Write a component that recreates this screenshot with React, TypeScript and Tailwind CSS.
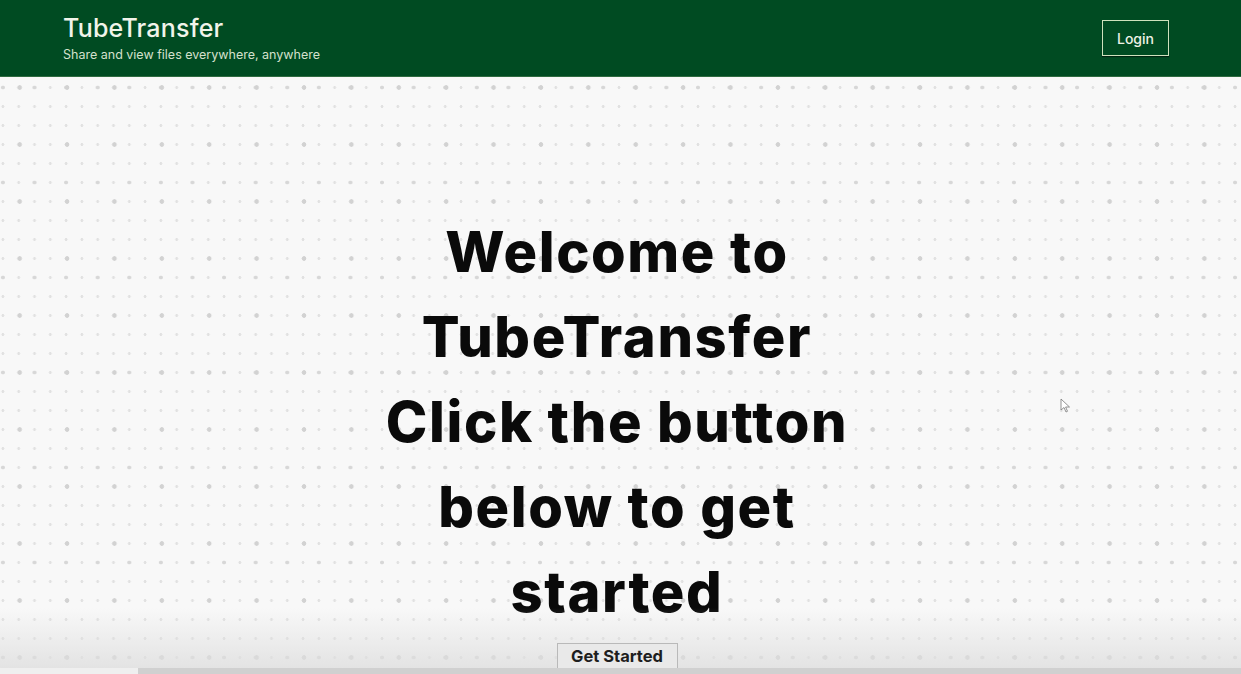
import React from "react";

export default function App() {
  const font = { fontFamily: "Inter, 'Noto Sans', sans-serif" };
  return (
    <div className="relative flex h-[674px] w-full flex-col overflow-hidden bg-[#f7f7f7]" style={font}>
      <header className="flex h-[77px] shrink-0 items-center justify-between border-b border-[#2f6b40] bg-[#004b22] pl-[63px] pr-[72px]">
        <div className="flex flex-col">
          <h1 className="text-[25px] font-medium leading-[26px] tracking-[0.2px] text-[#f1f4ea]">TubeTransfer</h1>
          <p className="mt-[7px] text-[12.5px] leading-[14px] text-[#d4e0cc]">Share and view files everywhere, anywhere</p>
        </div>
        <button className="h-[36px] w-[67px] border border-[#cfe2bd] text-[14px] font-medium text-[#eef2e6] shadow-[0_1px_1px_rgba(0,0,0,0.5)]">
          Login
        </button>
      </header>
      <main className="relative flex flex-1 flex-col items-center bg-[#f8f8f8] pr-[7px] [background-image:radial-gradient(circle,#d2d2d2_2px,transparent_2.6px),radial-gradient(circle,#d7d7d7_1.6px,transparent_2.2px),radial-gradient(circle,#e1e1e1_1.2px,transparent_1.7px)] [background-size:47.4px_57px,31.6px_95px,15.8px_19px] [background-position:-4px_-18px,-12.9px_-37px,-5px_1px]">
        <h2 className="mt-[133px] flex flex-col items-center text-center text-[56px] font-extrabold leading-[85px] tracking-[1.6px] text-[#0a0a0a]">
          <span className="whitespace-nowrap">Welcome to</span>
          <span className="whitespace-nowrap">TubeTransfer</span>
          <span className="whitespace-nowrap">Click the button</span>
          <span className="whitespace-nowrap">below to get</span>
          <span className="whitespace-nowrap">started</span>
        </h2>
        <button className="relative z-10 mt-[8px] h-[27px] w-[121px] border border-[#b9b9b9] bg-[#e9e9e9] text-[16.5px] font-bold leading-none text-[#1e1e1e]">
          Get Started
        </button>
      </main>
      <div className="pointer-events-none absolute bottom-[6px] left-0 h-[60px] w-full bg-linear-to-b from-transparent to-[#dedede]/80" />
      <div className="absolute bottom-0 left-0 z-20 flex h-[6px] w-full bg-[#d0d0d0]">
        <div className="h-full w-[138px] bg-[#efefef]" />
      </div>
      <svg className="absolute left-[1060px] top-[398px]" width="12" height="16" viewBox="0 0 12 16">
        <path d="M1 1 L1 12 L4 9.5 L6 14 L7.5 13.3 L5.6 9 L9.5 9 Z" fill="#fff" stroke="#777" strokeWidth="0.8" />
      </svg>
    </div>
  );
}
